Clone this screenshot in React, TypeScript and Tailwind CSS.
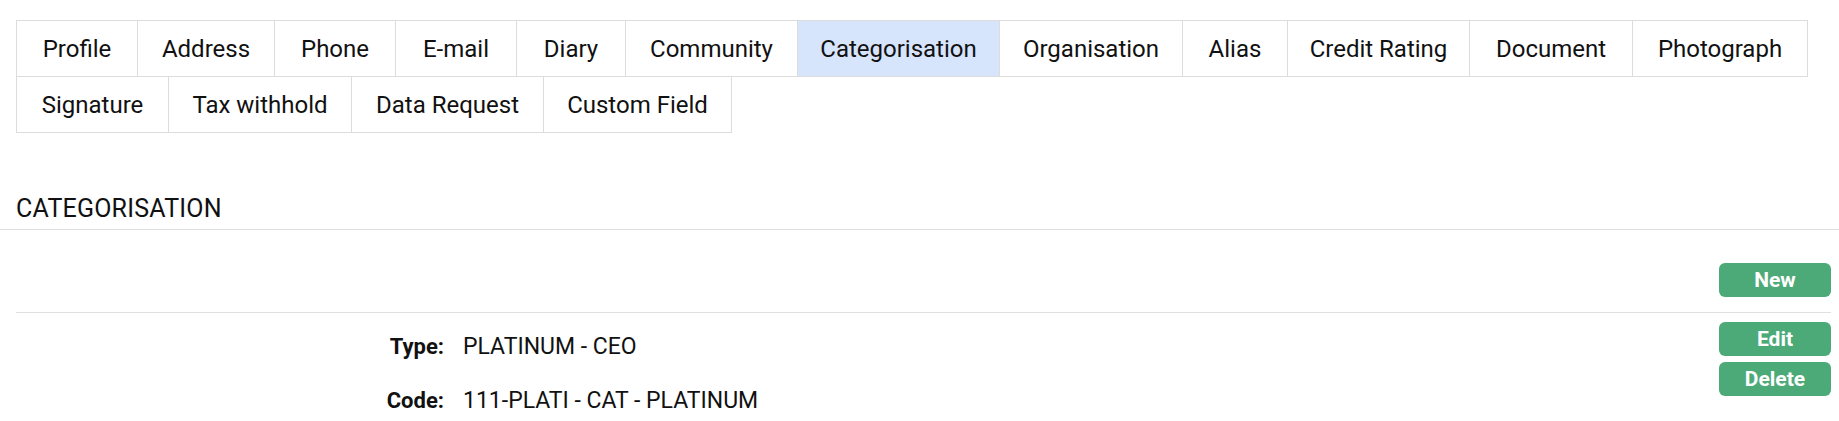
import React from 'react'

const tabsTop = [
  { label: 'Profile', w: 'w-[122px]' },
  { label: 'Address', w: 'w-[138px]' },
  { label: 'Phone', w: 'w-[122px]' },
  { label: 'E-mail', w: 'w-[122px]' },
  { label: 'Diary', w: 'w-[110px]' },
  { label: 'Community', w: 'w-[173px]' },
  { label: 'Categorisation', w: 'w-[203px]', active: true },
  { label: 'Organisation', w: 'w-[184px]' },
  { label: 'Alias', w: 'w-[106px]' },
  { label: 'Credit Rating', w: 'w-[183px]' },
  { label: 'Document', w: 'w-[164px]' },
  { label: 'Photograph', w: 'w-[176px]' },
]

const tabsBottom = [
  { label: 'Signature', w: 'w-[153px]' },
  { label: 'Tax withhold', w: 'w-[184px]' },
  { label: 'Data Request', w: 'w-[193px]' },
  { label: 'Custom Field', w: 'w-[189px]' },
]

const font = { fontFamily: 'Roboto, "Liberation Sans", sans-serif' }

function Tab({ label, w, active }: { label: string; w: string; active?: boolean }) {
  return (
    <div
      className={`${w} h-[57px] -ml-px -mt-px flex items-center justify-center border border-[#dcdcdc] text-[24px] text-[#111] ${active ? 'bg-[#d6e4fc]' : 'bg-white'}`}
    >
      {label}
    </div>
  )
}

function GreenButton({ children }: { children: React.ReactNode }) {
  return (
    <button className="w-[112px] h-[34px] rounded-[6px] bg-[#4caa78] text-white text-[21px] font-bold leading-none cursor-pointer">
      {children}
    </button>
  )
}

export default function App() {
  return (
    <div className="bg-white min-h-[421px] w-[1839px] text-[#111]" style={font}>
      <div className="pt-[21px] pl-[17px]">
        <div className="flex">
          {tabsTop.map(t => <Tab key={t.label} {...t} />)}
        </div>
        <div className="flex">
          {tabsBottom.map(t => <Tab key={t.label} {...t} />)}
        </div>
      </div>

      <h2 className="mt-[61px] pl-[16px] text-[25px] leading-[30px] tracking-[0.2px] text-[#111] pb-[5px] border-b border-[#e0e0e0]">
        CATEGORISATION
      </h2>

      <div className="pl-[16px] pr-[8px]">
        <div className="flex justify-end pt-[33px] pb-[15px] border-b border-[#e0e0e0]">
          <GreenButton>New</GreenButton>
        </div>

        <div className="flex pt-[9px]">
          <div className="flex-1 grid grid-cols-[428px_1fr] gap-x-[19px] gap-y-[24px] pt-[10px] text-[23px] leading-[30px]">
            <div className="text-right font-bold text-[22px]">Type:</div>
            <div>PLATINUM - CEO</div>
            <div className="text-right font-bold text-[22px]">Code:</div>
            <div>111-PLATI - CAT - PLATINUM</div>
          </div>
          <div className="flex flex-col gap-[6px]">
            <GreenButton>Edit</GreenButton>
            <GreenButton>Delete</GreenButton>
          </div>
        </div>
      </div>
    </div>
  )
}
